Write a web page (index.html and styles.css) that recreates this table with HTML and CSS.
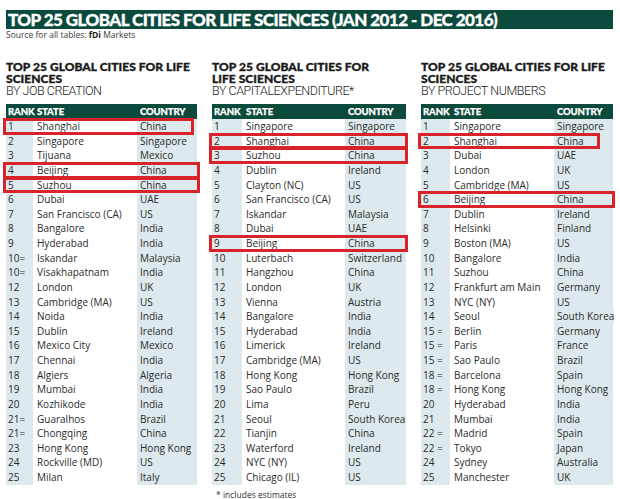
FILE: index.html
```html
<!DOCTYPE html>
<html lang="en">
<head>
<meta charset="utf-8">
<title>Top 25 Global Cities for Life Sciences</title>
<link rel="stylesheet" href="styles.css">
</head>
<body>
<div class="page">
  <h1 class="title">TOP 25 GLOBAL CITIES FOR LIFE SCIENCES (JAN 2012 - DEC 2016)</h1>
  <p class="source">Source for all tables: <b>fDi</b> Markets</p>
  <div class="panels">
    <section class="panel p1">
      <h2 class="ph"><span class="ph-bold">TOP 25 GLOBAL CITIES FOR LIFE<br>SCIENCES</span><span class="ph-sub">BY JOB CREATION</span></h2>
      <div class="tbl">
        <div class="row head"><span>RANK</span><span>STATE</span><span>COUNTRY</span></div>
        <div class="row hl hl-in"><span>1</span><span>Shanghai</span><span>China</span></div>
        <div class="row"><span>2</span><span>Singapore</span><span>Singapore</span></div>
        <div class="row"><span>3</span><span>Tijuana</span><span>Mexico</span></div>
        <div class="row hl hl-out"><span>4</span><span>Beijing</span><span>China</span></div>
        <div class="row hl hl-out"><span>5</span><span>Suzhou</span><span>China</span></div>
        <div class="row"><span>6</span><span>Dubai</span><span>UAE</span></div>
        <div class="row"><span>7</span><span>San Francisco (CA)</span><span>US</span></div>
        <div class="row"><span>8</span><span>Bangalore</span><span>India</span></div>
        <div class="row"><span>9</span><span>Hyderabad</span><span>India</span></div>
        <div class="row"><span>10=</span><span>Iskandar</span><span>Malaysia</span></div>
        <div class="row"><span>10=</span><span>Visakhapatnam</span><span>India</span></div>
        <div class="row"><span>12</span><span>London</span><span>UK</span></div>
        <div class="row"><span>13</span><span>Cambridge (MA)</span><span>US</span></div>
        <div class="row"><span>14</span><span>Noida</span><span>India</span></div>
        <div class="row"><span>15</span><span>Dublin</span><span>Ireland</span></div>
        <div class="row"><span>16</span><span>Mexico City</span><span>Mexico</span></div>
        <div class="row"><span>17</span><span>Chennai</span><span>India</span></div>
        <div class="row"><span>18</span><span>Algiers</span><span>Algeria</span></div>
        <div class="row"><span>19</span><span>Mumbai</span><span>India</span></div>
        <div class="row"><span>20</span><span>Kozhikode</span><span>India</span></div>
        <div class="row"><span>21=</span><span>Guaralhos</span><span>Brazil</span></div>
        <div class="row"><span>21=</span><span>Chongqing</span><span>China</span></div>
        <div class="row"><span>23</span><span>Hong Kong</span><span>Hong Kong</span></div>
        <div class="row"><span>24</span><span>Rockville (MD)</span><span>US</span></div>
        <div class="row"><span>25</span><span>Milan</span><span>Italy</span></div>
      </div>
    </section>
    <section class="panel p2">
      <h2 class="ph"><span class="ph-bold">TOP 25 GLOBAL CITIES FOR<br>LIFE SCIENCES</span><span class="ph-sub">BY CAPITALEXPENDITURE*</span></h2>
      <div class="tbl">
        <div class="row head"><span>RANK</span><span>STATE</span><span>COUNTRY</span></div>
        <div class="row"><span>1</span><span>Singapore</span><span>Singapore</span></div>
        <div class="row hl"><span>2</span><span>Shanghai</span><span>China</span></div>
        <div class="row hl"><span>3</span><span>Suzhou</span><span>China</span></div>
        <div class="row"><span>4</span><span>Dublin</span><span>Ireland</span></div>
        <div class="row"><span>5</span><span>Clayton (NC)</span><span>US</span></div>
        <div class="row"><span>6</span><span>San Francisco (CA)</span><span>US</span></div>
        <div class="row"><span>7</span><span>Iskandar</span><span>Malaysia</span></div>
        <div class="row"><span>8</span><span>Dubai</span><span>UAE</span></div>
        <div class="row hl"><span>9</span><span>Beijing</span><span>China</span></div>
        <div class="row"><span>10</span><span>Luterbach</span><span>Switzerland</span></div>
        <div class="row"><span>11</span><span>Hangzhou</span><span>China</span></div>
        <div class="row"><span>12</span><span>London</span><span>UK</span></div>
        <div class="row"><span>13</span><span>Vienna</span><span>Austria</span></div>
        <div class="row"><span>14</span><span>Bangalore</span><span>India</span></div>
        <div class="row"><span>15</span><span>Hyderabad</span><span>India</span></div>
        <div class="row"><span>16</span><span>Limerick</span><span>Ireland</span></div>
        <div class="row"><span>17</span><span>Cambridge (MA)</span><span>US</span></div>
        <div class="row"><span>18</span><span>Hong Kong</span><span>Hong Kong</span></div>
        <div class="row"><span>19</span><span>Sao Paulo</span><span>Brazil</span></div>
        <div class="row"><span>20</span><span>Lima</span><span>Peru</span></div>
        <div class="row"><span>21</span><span>Seoul</span><span>South Korea</span></div>
        <div class="row"><span>22</span><span>Tianjin</span><span>China</span></div>
        <div class="row"><span>23</span><span>Waterford</span><span>Ireland</span></div>
        <div class="row"><span>24</span><span>NYC (NY)</span><span>US</span></div>
        <div class="row"><span>25</span><span>Chicago (IL)</span><span>US</span></div>
      </div>
      <p class="note">* includes estimates</p>
    </section>
    <section class="panel p3">
      <h2 class="ph"><span class="ph-bold">TOP 25 GLOBAL CITIES FOR LIFE<br>SCIENCES</span><span class="ph-sub">BY PROJECT NUMBERS</span></h2>
      <div class="tbl">
        <div class="row head"><span>RANK</span><span>STATE</span><span>COUNTRY</span></div>
        <div class="row"><span>1</span><span>Singapore</span><span>Singapore</span></div>
        <div class="row hl hl-short"><span>2</span><span>Shanghai</span><span>China</span></div>
        <div class="row"><span>3</span><span>Dubai</span><span>UAE</span></div>
        <div class="row"><span>4</span><span>London</span><span>UK</span></div>
        <div class="row"><span>5</span><span>Cambridge (MA)</span><span>US</span></div>
        <div class="row hl"><span>6</span><span>Beijing</span><span>China</span></div>
        <div class="row"><span>7</span><span>Dublin</span><span>Ireland</span></div>
        <div class="row"><span>8</span><span>Helsinki</span><span>Finland</span></div>
        <div class="row"><span>9</span><span>Boston (MA)</span><span>US</span></div>
        <div class="row"><span>10</span><span>Bangalore</span><span>India</span></div>
        <div class="row"><span>11</span><span>Suzhou</span><span>China</span></div>
        <div class="row"><span>12</span><span>Frankfurt am Main</span><span>Germany</span></div>
        <div class="row"><span>13</span><span>NYC (NY)</span><span>US</span></div>
        <div class="row"><span>14</span><span>Seoul</span><span>South Korea</span></div>
        <div class="row"><span>15 =</span><span>Berlin</span><span>Germany</span></div>
        <div class="row"><span>15 =</span><span>Paris</span><span>France</span></div>
        <div class="row"><span>15 =</span><span>Sao Paulo</span><span>Brazil</span></div>
        <div class="row"><span>18 =</span><span>Barcelona</span><span>Spain</span></div>
        <div class="row"><span>18 =</span><span>Hong Kong</span><span>Hong Kong</span></div>
        <div class="row"><span>20</span><span>Hyderabad</span><span>India</span></div>
        <div class="row"><span>21</span><span>Mumbai</span><span>India</span></div>
        <div class="row"><span>22 =</span><span>Madrid</span><span>Spain</span></div>
        <div class="row"><span>22 =</span><span>Tokyo</span><span>Japan</span></div>
        <div class="row"><span>24</span><span>Sydney</span><span>Australia</span></div>
        <div class="row"><span>25</span><span>Manchester</span><span>UK</span></div>
      </div>
    </section>
  </div>
</div>
</body>
</html>
```
FILE: styles.css
```css
* { box-sizing: border-box; }
html, body { margin: 0; padding: 0; background: #ffffff; }
body { font-family: "Open Sans", "Noto Sans", sans-serif; color: #2b2b2b; }

.page { width: 620px; height: 499px; padding: 10px 0 0 6px; overflow: hidden; }

.title {
  margin: 0;
  width: 607px;
  height: 19px;
  background: #0c4a3d;
  color: #ffffff;
  font-family: "Lato", sans-serif;
  font-weight: 900;
  font-size: 17px;
  line-height: 19px;
  letter-spacing: -0.55px;
  padding-left: 2px;
  white-space: nowrap;
  -webkit-text-stroke: 0.3px #ffffff;
}

.source {
  margin: 0;
  font-size: 8.5px;
  line-height: 11px;
  color: #3a3a3a;
}
.source b { font-weight: 700; color: #1e1e1e; }

.panels {
  display: grid;
  grid-template-columns: 191px 194px 192px;
  column-gap: 15px;
  margin-top: 21px;
  align-items: start;
}

.ph { margin: 0 0 6px; display: flex; flex-direction: column; }
.ph-bold {
  font-family: "Lato", sans-serif;
  font-weight: 900;
  font-size: 12px;
  line-height: 12px;
  letter-spacing: 0.05px;
  color: #1b1b1b;
  -webkit-text-stroke: 0.35px #1b1b1b;
}
.ph-sub {
  font-family: "Roboto", sans-serif;
  font-weight: 300;
  font-size: 12.5px;
  line-height: 12.5px;
  letter-spacing: -0.45px;
  color: #1b1b1b;
}

.tbl { display: flex; flex-direction: column; }

.row {
  display: grid;
  height: 14.625px;
  border-bottom: 1px solid #3f625d;
  font-size: 10px;
  line-height: 13.6px;
  white-space: nowrap;
  position: relative;
}
.row:last-child { border-bottom: 2px solid #7f9693; }
.row > span { padding-left: 3px; padding-top: 1px; }
.row > span:nth-child(1), .row > span:nth-child(3) { background: #dde9ec; }
.row > span:nth-child(1) { padding-left: 2px; }
.row > span:nth-child(2) { padding-left: 4px; background: #ffffff; }

.row.head {
  height: 15.6px;
  background: #0c4a3d;
  border-bottom: 0;
  color: #ffffff;
  font-family: "Lato", sans-serif;
  font-weight: 900;
  font-size: 9.5px;
  line-height: 15.6px;
  letter-spacing: -0.1px;
  -webkit-text-stroke: 0.25px #ffffff;
}
.row.head > span { background: transparent; padding-top: 0; }

.p1 .row { grid-template-columns: 27px 104px 1fr; }
.p2 .row { grid-template-columns: 30px 103px 1fr; }
.p3 .row { grid-template-columns: 29px 104px 1fr; }

.hl::after {
  content: "";
  position: absolute;
  top: -1px;
  bottom: -2px;
  left: -3px;
  right: -2px;
  border: 3px solid #d8232b;
  pointer-events: none;
  z-index: 2;
}
.hl-in::after { right: 3px; }
.hl-out::after { right: -3px; }
.hl-short::after { right: 13px; }

.note {
  margin: 4px 0 0 4px;
  font-size: 8.5px;
  line-height: 11px;
  color: #333333;
}
```
